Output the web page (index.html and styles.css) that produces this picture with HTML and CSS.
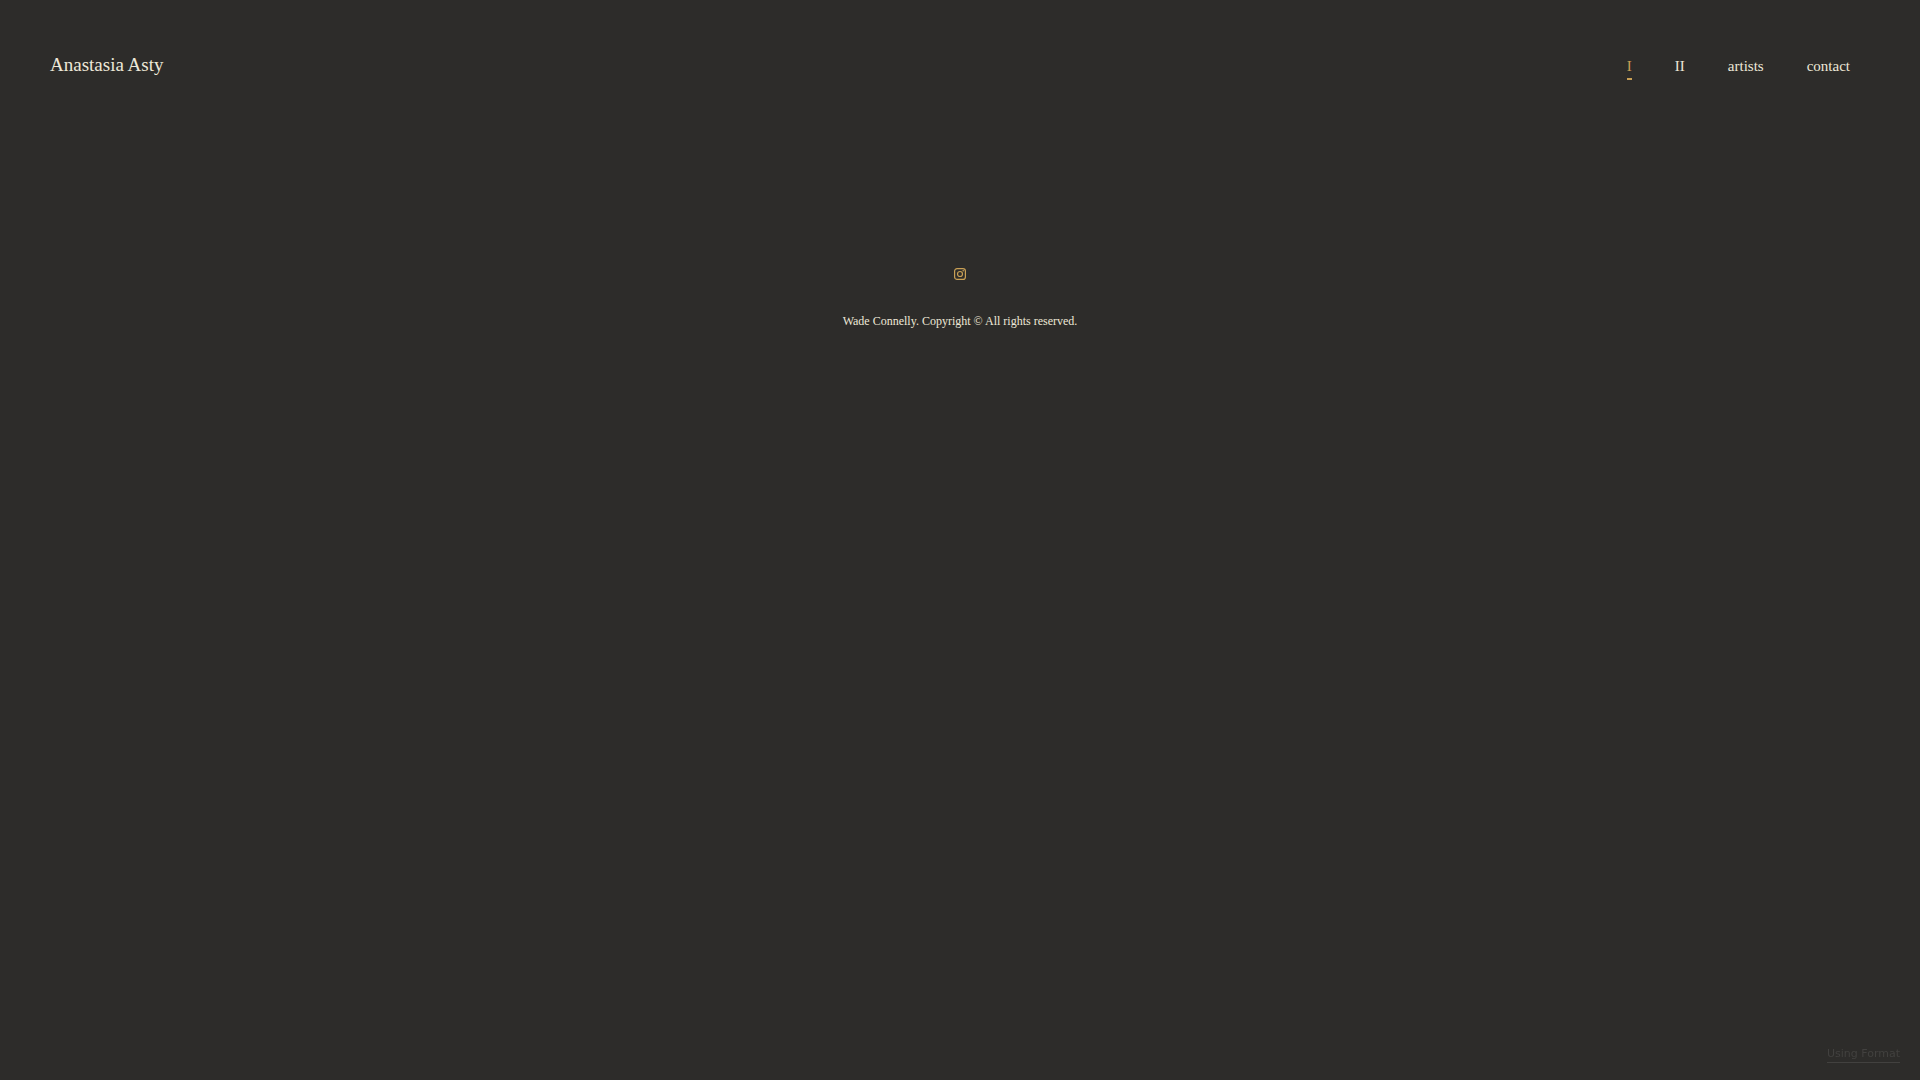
FILE: index.html
```html
<!DOCTYPE html>
<html lang="en">
<head>
    <meta charset="UTF-8">
    <meta name="viewport" content="width=device-width, initial-scale=1.0">
    <title>Anastasia Asty</title>
    <link rel="stylesheet" href="styles.css">
</head>
<body>
    <header class="header">
        <a class="logo" href="#">Anastasia Asty</a>
        <nav class="nav">
            <a class="active" href="#">I</a>
            <a href="#">II</a>
            <a href="#">artists</a>
            <a href="#">contact</a>
        </nav>
    </header>

    <footer class="footer">
        <a class="social" href="#" aria-label="Instagram">
            <svg viewBox="0 0 12 12" width="12" height="12" fill="none" stroke="currentColor" stroke-width="1.2">
                <rect x="0.6" y="0.6" width="10.8" height="10.8" rx="2.5"/>
                <circle cx="6" cy="6" r="2.5"/>
                <circle cx="9.2" cy="2.8" r="0.8" fill="currentColor" stroke="none"/>
            </svg>
        </a>
        <p class="copyright">Wade Connelly. Copyright © All rights reserved.</p>
    </footer>

    <a class="badge" href="#">Using Format</a>
</body>
</html>
```

FILE: styles.css
```css
:root {
    --background: #2d2c2a;
    --text: #ede8d8;
    --accent: #c9a055;
}

body {
    margin: 0;
    background: var(--background);
    color: var(--text);
    font-family: "Liberation Serif", serif;
}

a {
    color: inherit;
    text-decoration: none;
}

.header {
    display: flex;
    justify-content: space-between;
    align-items: center;
    padding: 49px 70px 50px 50px;
}

.logo {
    font-size: 19px;
    line-height: 30px;
}

.nav {
    display: flex;
    gap: 43px;
    font-size: 15px;
    line-height: 22px;
}

.nav a {
    padding: 6px 0 1px;
    border-bottom: 2px solid transparent;
}

.nav .active {
    color: var(--accent);
    border-color: var(--accent);
}

.footer {
    padding-top: 136px;
    text-align: center;
}

.social {
    display: inline-block;
    color: var(--accent);
}

.social svg {
    display: block;
}

.copyright {
    margin: 27px 0 0;
    font-size: 12px;
    line-height: 20px;
}

.badge {
    position: fixed;
    right: 20px;
    bottom: 17px;
    border-bottom: 1px solid #42413f;
    color: #42413f;
    font-family: "DejaVu Sans", sans-serif;
    font-size: 11px;
    line-height: 16px;
}
```
